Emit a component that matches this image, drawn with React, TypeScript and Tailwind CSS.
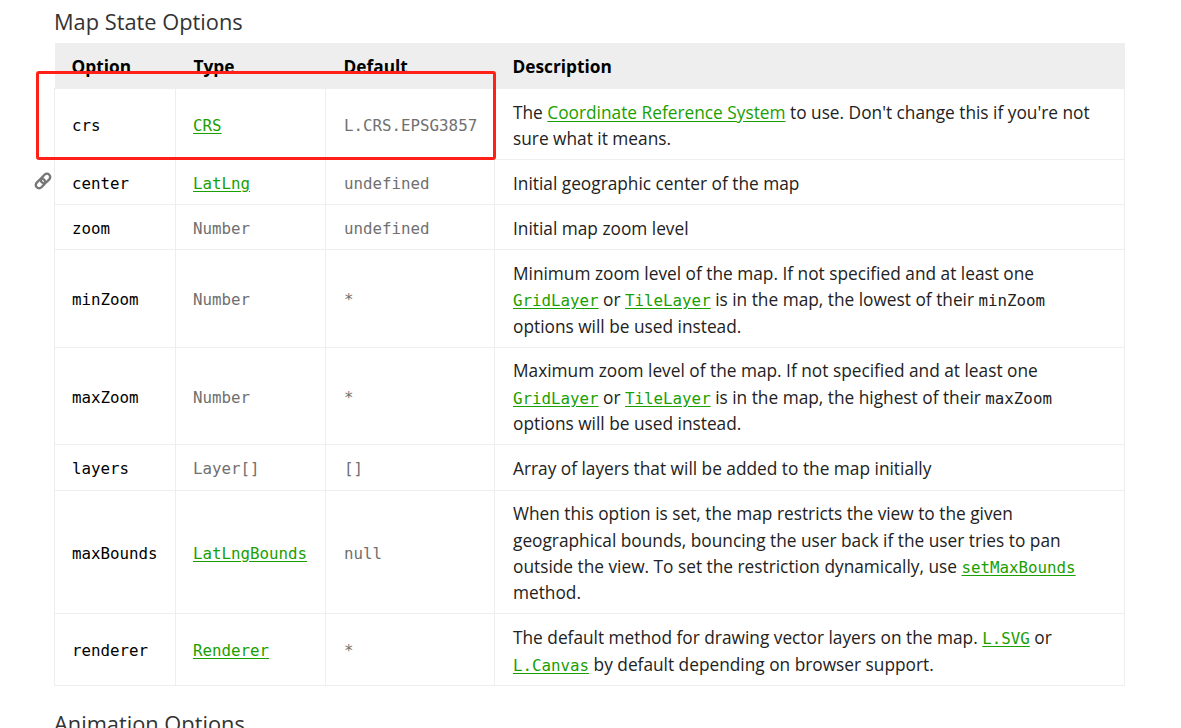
import type { ReactNode } from 'react';

const mono = "font-['DejaVu_Sans_Mono','Liberation_Mono',monospace] text-[15.8px]";

function A({ children, code }: { children: ReactNode; code?: boolean }) {
  return <a className={`text-[#1aa000] underline underline-offset-2 ${code ? `${mono} leading-none` : ''}`}>{children}</a>;
}

function Code({ children }: { children: ReactNode }) {
  return <code className={`${mono} leading-none text-[#222]`}>{children}</code>;
}

// chain icon next to the hovered row
function ChainIcon() {
  return (
    <svg className="absolute left-[-21px] top-[12px] h-[18px] w-[18px]" viewBox="0 0 18 18" fill="none" stroke="#777777" strokeWidth="2.4">
      <rect x="1.2" y="8.2" width="10.6" height="6.6" rx="3.3" transform="rotate(-45 6.5 11.5)" />
      <rect x="6.2" y="3.2" width="10.6" height="6.6" rx="3.3" transform="rotate(-45 11.5 6.5)" />
    </svg>
  );
}

const rows: { option: string; type: ReactNode; def: string; desc: ReactNode; height: string; anchor?: boolean }[] = [
  {
    option: 'crs',
    height: 'h-[71px]',
    type: <A>CRS</A>,
    def: 'L.CRS.EPSG3857',
    desc: (
      <>
        The <A>Coordinate Reference System</A> to use. Don't change this if you're not sure what it means.
      </>
    ),
  },
  { option: 'center', height: 'h-[45px]', type: <A>LatLng</A>, def: 'undefined', desc: 'Initial geographic center of the map', anchor: true },
  { option: 'zoom', height: 'h-[45px]', type: 'Number', def: 'undefined', desc: 'Initial map zoom level' },
  {
    option: 'minZoom',
    height: 'h-[98px]',
    type: 'Number',
    def: '*',
    desc: (
      <>
        Minimum zoom level of the map. If not specified and at least one <A code>GridLayer</A> or <A code>TileLayer</A> is in the map, the lowest of their <Code>minZoom</Code> options will be used instead.
      </>
    ),
  },
  {
    option: 'maxZoom',
    height: 'h-[97px]',
    type: 'Number',
    def: '*',
    desc: (
      <>
        Maximum zoom level of the map. If not specified and at least one <A code>GridLayer</A> or <A code>TileLayer</A> is in the map, the highest of their <Code>maxZoom</Code> options will be used instead.
      </>
    ),
  },
  { option: 'layers', height: 'h-[46px]', type: 'Layer[]', def: '[]', desc: 'Array of layers that will be added to the map initially' },
  {
    option: 'maxBounds',
    height: 'h-[123px]',
    type: <A>LatLngBounds</A>,
    def: 'null',
    desc: (
      <>
        When this option is set, the map restricts the view to the given geographical bounds, bouncing the user back if the user tries to pan outside the view. To set the restriction dynamically, use <A code>setMaxBounds</A> method.
      </>
    ),
  },
  {
    option: 'renderer',
    height: 'h-[72px]',
    type: <A>Renderer</A>,
    def: '*',
    desc: (
      <>
        The default method for drawing vector layers on the map. <A code>L.SVG</A> or <A code>L.Canvas</A> by default depending on browser support.
      </>
    ),
  },
];

export default function App() {
  return (
    <div className="relative h-[728px] overflow-hidden bg-white pl-[54px] pr-[56px] font-['Open_Sans','Noto_Sans',sans-serif] text-[17.3px] text-[#222]">
      <h3 className="pt-[7px] text-[21.8px] leading-[29px] text-[#333]">Map State Options</h3>
      <table className="mt-[7px] w-[1071px] table-fixed border-collapse leading-[26.4px]">
        <colgroup>
          <col className="w-[121px]" />
          <col className="w-[150px]" />
          <col className="w-[169px]" />
          <col />
        </colgroup>
        <thead>
          <tr className="h-[45px] bg-[#eeeeee] text-left font-bold text-black">
            <th className="pl-[17px] pt-[3px]">Option</th>
            <th className="pl-[18px] pt-[3px]">Type</th>
            <th className="pl-[18px] pt-[3px]">Default</th>
            <th className="pl-[18px] pt-[3px]">Description</th>
          </tr>
        </thead>
        <tbody>
          {rows.map((row) => (
            <tr key={row.option} className={row.height}>
              <td className={`relative border border-[#eeeeee] pl-[17px] pt-[5px] text-black ${mono}`}>
                {row.anchor && <ChainIcon />}
                {row.option}
              </td>
              <td className={`border border-[#eeeeee] pl-[17px] pt-[5px] text-[#707070] ${mono}`}>{row.type}</td>
              <td className={`border border-[#eeeeee] pl-[18px] pt-[5px] text-[#707070] ${mono}`}>{row.def}</td>
              <td className="border border-[#eeeeee] pl-[18px] pr-[18px] pt-[5px]">{row.desc}</td>
            </tr>
          ))}
        </tbody>
      </table>
      <h3 className="mt-[23px] text-[21.8px] leading-[29px] text-[#333]">Animation Options</h3>
      <div className="absolute left-[36px] top-[71px] h-[89px] w-[460px] rounded-[3px] border-[3px] border-[#ff2018]" />
    </div>
  );
}
